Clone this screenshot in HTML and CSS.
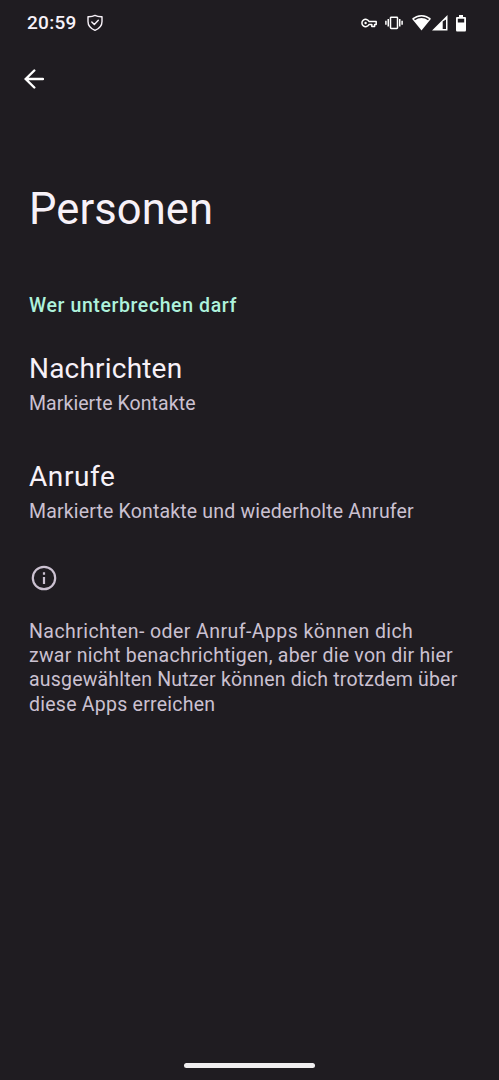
FILE: index.html
```html
<!DOCTYPE html>
<html lang="de">
<head>
<meta charset="utf-8">
<meta name="viewport" content="width=device-width, initial-scale=1">
<title>Personen</title>
<link rel="stylesheet" href="styles.css">
</head>
<body>
<div class="screen">
  <header class="status">
    <span class="clock">20:59</span>
    <svg class="shield" width="16" height="18" viewBox="0 0 16 18" fill="none" stroke="currentColor" stroke-width="1.4" stroke-linejoin="round" stroke-linecap="round"><path d="M8 1.400C5.800 2.500 3.300 2.800 1 2.700V7.500C1 11.500 4 14.700 8 16.300 12 14.700 15 11.500 15 7.500V2.700C12.700 2.800 10.200 2.500 8 1.400Z"/><path d="M4.800 8l2.500 2.500L11.300 6.300"/></svg>
    <div class="indicators">
      <svg class="key" width="16" height="12" viewBox="0 0 16 12" fill="none" stroke="currentColor" stroke-width="1.500" stroke-linejoin="round"><path d="M8 4.500H15.200V7.500H13.600V9.600H10.800V7.500H8A3.700 3.700 0 1 1 8 4.500Z"/><circle cx="4.600" cy="6" r="1.200" fill="currentColor" stroke="none"/></svg>
      <svg class="vibrate" width="18" height="14" viewBox="0 0 18 14" fill="none" stroke="currentColor" stroke-width="1.500"><rect x="5.500" y="1.200" width="7" height="11.200" rx=".7"/><path d="M3.250 3v7.600M.9 4.800v4M14.750 3v7.600M17.100 4.800v4"/></svg>
      <svg class="wifi" width="19" height="16" viewBox="0 0 19 16"><path fill="currentColor" d="M9.500 0C13.200 0 16.500 1.400 19 3.700L9.500 15.500 0 3.700C2.500 1.400 5.800 0 9.500 0Z"/><path d="M2.500 4.700C6.600 1.500 12.400 1.500 16.500 4.700" fill="none" stroke="#1f1c21" stroke-width="1.500"/></svg>
      <svg class="signal" width="16" height="16" viewBox="0 0 16 16"><path fill="currentColor" fill-rule="evenodd" d="M15.500 0V15.500H0ZM14 4.500L10.700 6.500V14H14Z"/></svg>
      <svg class="battery" width="10" height="17" viewBox="0 0 10 17"><path fill="currentColor" fill-rule="evenodd" d="M3 0H7V2H9Q10 2 10 3V15Q10 16.500 9 16.500H1Q0 16.500 0 15V3Q0 2 1 2H3ZM1.800 3.700V7.500H8.200V3.700Z"/></svg>
    </div>
  </header>
  <nav class="toolbar">
    <svg class="back" width="20" height="20" viewBox="0 0 20 20" fill="none" stroke="currentColor" stroke-width="2.400" stroke-linecap="round"><path d="M19 10H2M10.300 1.500L1.700 10l8.600 8.500"/></svg>
  </nav>
  <main class="content">
    <h1 class="title">Personen</h1>
    <h2 class="section">Wer unterbrechen darf</h2>
    <section class="setting">
      <h3 class="name messages">Nachrichten</h3>
      <p class="summary short">Markierte Kontakte</p>
    </section>
    <section class="setting">
      <h3 class="name">Anrufe</h3>
      <p class="summary">Markierte Kontakte und wiederholte Anrufer</p>
    </section>
    <footer class="note">
      <svg class="info" width="26" height="26" viewBox="0 0 26 26" fill="none" stroke="currentColor" stroke-width="2.200"><circle cx="13" cy="13" r="11.200"/><path d="M13 12v7M13 7.300v2.400"/></svg>
      <p class="explanation"><span class="loose">Nachrichten- oder Anruf-Apps können dich</span><br>zwar nicht benachrichtigen, aber die von dir hier<br><span class="tight">ausgewählten Nutzer können dich trotzdem über</span><br>diese Apps erreichen</p>
    </footer>
  </main>
  <div class="home-bar"></div>
</div>
</body>
</html>
```
FILE: styles.css
```css
* { box-sizing: border-box; }
body { margin: 0; background: #1f1c21; color: #f7f1f8; font-family: Roboto, "Open Sans", sans-serif; }
h1, h2, h3, p { margin: 0; font-weight: 400; white-space: nowrap; }
svg { display: block; flex: none; }
.screen { height: 1080px; display: flex; flex-direction: column; overflow: hidden; }
.status { height: 46px; display: flex; align-items: center; padding: 0 33px 0 27px; }
.clock { font-size: 19px; font-weight: 500; letter-spacing: .3px; line-height: 46px; }
.shield { margin-left: 10px; }
.indicators { display: flex; align-items: center; margin-left: auto; color: #fff; }
.vibrate { margin-left: 8px; }
.wifi { margin-left: 9px; }
.signal { margin-left: 1px; }
.battery { margin-left: 8px; }
.toolbar { height: 66px; display: flex; align-items: center; padding-left: 24px; color: #fff; }
.content { flex: 1; padding: 70px 29px 0; }
.title { font-size: 43.5px; line-height: 56px; letter-spacing: .1px; }
.section { margin-top: 54px; font-size: 19.5px; font-weight: 500; line-height: 28px; letter-spacing: .6px; color: #aef2dc; }
.setting { height: 108px; padding-top: 31px; }
.name { font-size: 28px; line-height: 36px; letter-spacing: .6px; }
.messages { letter-spacing: .2px; }
.summary { margin-top: 4px; font-size: 19.5px; line-height: 26px; letter-spacing: .17px; color: #cbc1d1; }
.short { letter-spacing: .07px; }
.note { padding: 29px 0 0; color: #cbc1d1; }
.info { margin-left: 2px; }
.explanation { margin-top: 29px; font-size: 19.5px; line-height: 24.2px; letter-spacing: .25px; }
.loose { letter-spacing: .43px; }
.tight { letter-spacing: .19px; }
.home-bar { width: 131px; height: 5px; margin: 0 auto 12px; border-radius: 3px; background: #f0eef0; }
```
